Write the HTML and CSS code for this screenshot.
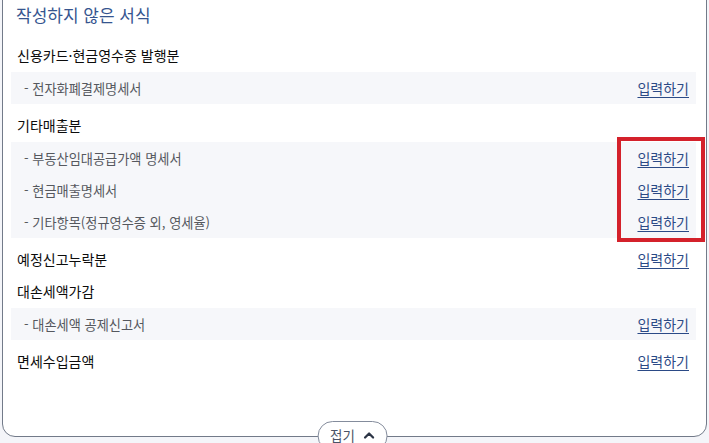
FILE: index.html
```html
<!DOCTYPE html>
<html lang="ko">
<head>
<meta charset="utf-8">
<title>작성하지 않은 서식</title>
<link rel="stylesheet" href="styles.css">
</head>
<body>
<div class="page">
  <section class="card">
    <h2 class="card-title">작성하지 않은 서식</h2>

    <div class="group">
      <div class="row head"><span class="label">신용카드·현금영수증 발행분</span></div>
      <ul class="subs">
        <li class="row sub"><span class="sublabel">- 전자화폐결제명세서</span><a class="link" href="#">입력하기</a></li>
      </ul>
    </div>

    <div class="group">
      <div class="row head"><span class="label">기타매출분</span></div>
      <ul class="subs">
        <li class="row sub"><span class="sublabel">- 부동산임대공급가액 명세서</span><a class="link" href="#">입력하기</a></li>
        <li class="row sub"><span class="sublabel">- 현금매출명세서</span><a class="link" href="#">입력하기</a></li>
        <li class="row sub"><span class="sublabel">- 기타항목(정규영수증 외, 영세율)</span><a class="link" href="#">입력하기</a></li>
      </ul>
    </div>

    <div class="group">
      <div class="row head"><span class="label">예정신고누락분</span><a class="link" href="#">입력하기</a></div>
    </div>

    <div class="group">
      <div class="row head"><span class="label">대손세액가감</span></div>
      <ul class="subs">
        <li class="row sub"><span class="sublabel">- 대손세액 공제신고서</span><a class="link" href="#">입력하기</a></li>
      </ul>
    </div>

    <div class="group">
      <div class="row head"><span class="label">면세수입금액</span><a class="link" href="#">입력하기</a></div>
    </div>

    <div class="highlight"></div>

    <button class="fold" type="button">
      <span>접기</span>
      <svg class="chev" width="11" height="8" viewBox="0 0 11 8" aria-hidden="true">
        <polyline points="1.5,6.5 5.5,2.5 9.5,6.5" fill="none" stroke="#2c3546" stroke-width="2.3" stroke-linecap="round" stroke-linejoin="round"/>
      </svg>
    </button>
  </section>
</div>
</body>
</html>
```

FILE: styles.css
```css
* { box-sizing: border-box; }

html, body {
  margin: 0;
  padding: 0;
  height: 443px;
  overflow: hidden;
  background: #f4f5f9;
  font-family: "Noto Sans CJK KR", "Noto Sans", sans-serif;
}

.page {
  padding: 0 2px;
}

.card {
  position: relative;
  margin-top: -20px;
  background: #ffffff;
  border: 1px solid #727a89;
  border-radius: 0 0 13px 13px;
  padding: 22px 10px 59px 8px;
}

.card-title {
  margin: 0 0 12px 5px;
  font-size: 17px;
  line-height: 24px;
  font-weight: 400;
  color: #36558f;
}

.group {
  display: flex;
  flex-direction: column;
}

.row {
  display: flex;
  align-items: center;
  justify-content: space-between;
  height: 32px;
  padding: 0 7px 0 6px;
}

.label {
  font-size: 14px;
  font-weight: 400;
  color: #0c0c0c;
}

.subs {
  list-style: none;
  margin: 1px 0 5px 0;
  padding: 0;
  background: #f6f7fa;
}

.sub {
  padding-left: 13px;
}

.sublabel {
  font-size: 13.2px;
  color: #55585e;
}

.link {
  font-size: 14px;
  color: #2b4a86;
  text-decoration: underline;
  text-decoration-thickness: 1px;
  text-underline-offset: 3px;
}

.highlight {
  position: absolute;
  left: 614px;
  top: 156px;
  width: 88px;
  height: 105px;
  border: 4px solid #d4212b;
}

.fold {
  position: absolute;
  left: 50%;
  bottom: -15px;
  transform: translateX(-50%);
  margin-left: -2px;
  display: flex;
  align-items: center;
  gap: 9px;
  height: 30px;
  padding: 0 12px 2px 12px;
  background: #ffffff;
  border: 1px solid #848c9c;
  border-radius: 15px;
  font-family: "Noto Sans CJK KR", "Noto Sans", sans-serif;
  font-size: 13.5px;
  color: #4a5366;
}

.chev {
  display: block;
}
```
